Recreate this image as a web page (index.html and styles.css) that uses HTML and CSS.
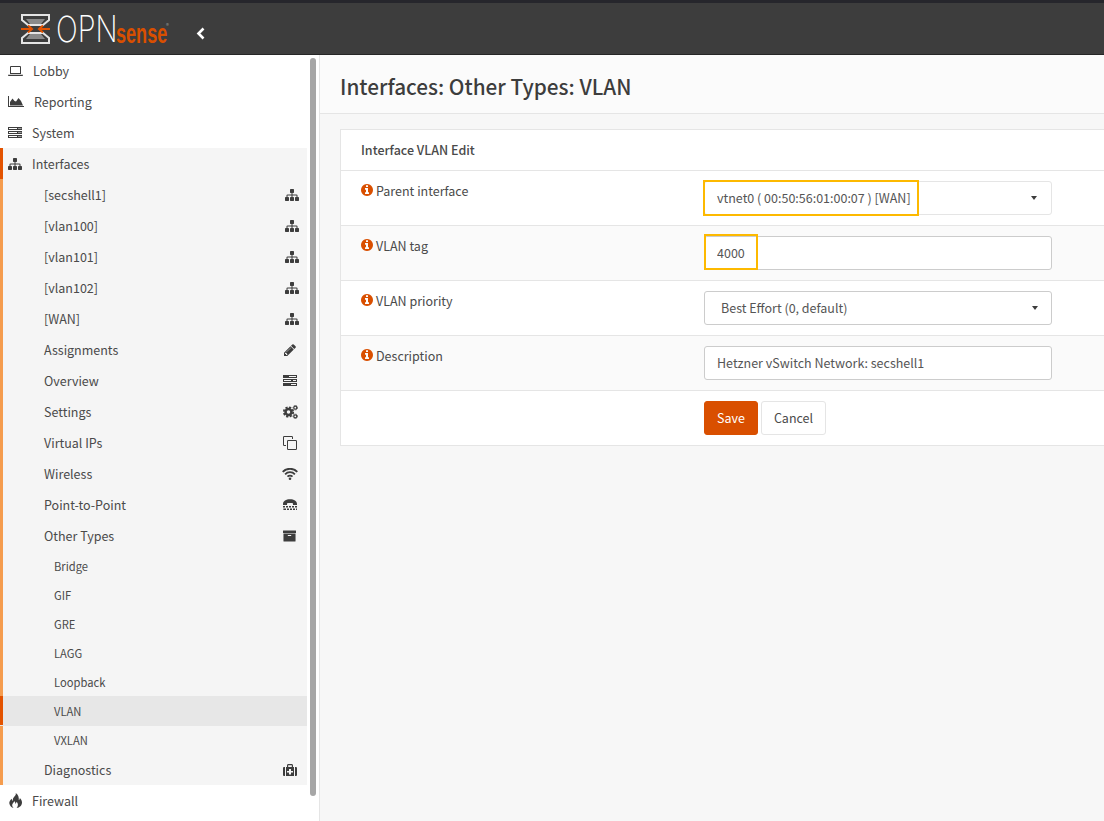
FILE: index.html
```html
<!DOCTYPE html>
<html lang="en">
    <head>
        <meta charset="UTF-8">
        <title>Interfaces: Other Types: VLAN</title>
        <link rel="stylesheet" href="styles.css">
    </head>
    <body>
        <svg class="icon_defs" width="0" height="0">
            <symbol id="i_sitemap" viewBox="0 128 1792 1536"><path d="M1792 1248v320q0 40-28 68t-68 28h-320q-40 0-68-28t-28-68v-320q0-40 28-68t68-28h96v-192h-512v192h96q40 0 68 28t28 68v320q0 40-28 68t-68 28h-320q-40 0-68-28t-28-68v-320q0-40 28-68t68-28h96v-192h-512v192h96q40 0 68 28t28 68v320q0 40-28 68t-68 28h-320q-40 0-68-28t-28-68v-320q0-40 28-68t68-28h96v-192q0-52 38-90t90-38h512v-192h-96q-40 0-68-28t-28-68v-320q0-40 28-68t68-28h320q40 0 68 28t28 68v320q0 40-28 68t-68 28h-96v192h512q52 0 90 38t38 90v192h96q40 0 68 28t28 68z"/></symbol>
            <symbol id="i_pencil" viewBox="0 128 1536 1536"><path d="M363 1536l91-91-235-235-91 91v107h128v128h107zm523-928q0-22-22-22-10 0-17 7l-542 542q-7 7-7 17 0 22 22 22 10 0 17-7l542-542q7-7 7-17zm-54-192l416 416-832 832h-416v-416zm683 96q0 53-37 90l-166 166-416-416 166-165q36-38 90-38 53 0 91 38l235 234q37 39 37 91z"/></symbol>
            <symbol id="i_archive" viewBox="0 128 1792 1536"><path d="M1152 832q0-26-19-45t-45-19h-384q-26 0-45 19t-19 45 19 45 45 19h384q26 0 45-19t19-45zm576-192v960q0 26-19 45t-45 19h-1536q-26 0-45-19t-19-45v-960q0-26 19-45t45-19h1536q26 0 45 19t19 45zm64-448v256q0 26-19 45t-45 19h-1664q-26 0-45-19t-19-45v-256q0-26 19-45t45-19h1664q26 0 45 19t19 45z"/></symbol>
            <symbol id="i_info" viewBox="0 128 1536 1536"><path d="M1024 1376v-160q0-14-9-23t-23-9h-96v-512q0-14-9-23t-23-9h-320q-14 0-23 9t-9 23v160q0 14 9 23t23 9h96v320h-96q-14 0-23 9t-9 23v160q0 14 9 23t23 9h448q14 0 23-9t9-23zm-128-896v-160q0-14-9-23t-23-9h-192q-14 0-23 9t-9 23v160q0 14 9 23t23 9h192q14 0 23-9t9-23zm640 416q0 209-103 385.5t-279.5 279.5-385.5 103-385.5-103-279.5-279.5-103-385.5 103-385.5 279.5-279.5 385.5-103 385.5 103 279.5 279.5 103 385.5z"/></symbol>
            <symbol id="i_area" viewBox="0 0 16 11"><path d="M0 0h1v10h15v1H0z"/><path d="M2 9.500V6l2.500-3.500L6.500 5 8 5.500 10.500 2 13 5l2 4.500z"/></symbol>
            <symbol id="i_laptop" viewBox="0 0 15 10"><path fill-rule="evenodd" d="M3 0h9a1 1 0 0 1 1 1v7H2V1a1 1 0 0 1 1-1zm0 1v6h9V1zM0 8.800h15v.4a.8.800 0 0 1-.8.800H.8a.8.800 0 0 1-.8-.8z"/></symbol>
            <symbol id="i_server" viewBox="0 0 14 11"><path fill-rule="evenodd" d="M0 0h14v3H0zm1 1v1h8V1zm9.500 0v1h1V1zm2 0v1h.8V1zM0 4h14v3H0zm1 1v1h8V5zm9.500 0v1h1V5zm2 0v1h.8V5zM0 8h14v3H0zm1 1v1h8V9zm9.500 0v1h1V9zm2 0v1h.8V9z"/></symbol>
            <symbol id="i_tasks" viewBox="0 0 14 11"><path fill-rule="evenodd" d="M0 0h14v3H0zm6 1v1h7V1zM0 4h14v3H0zm1 1v1h7V5zm9 0v1h3V5zM0 8h14v3H0zm8 1v1h5V9z"/></symbol>
            <symbol id="i_cogs" viewBox="0 0 15 14">
                <circle cx="5.500" cy="7" r="3" fill="none" stroke="currentColor" stroke-width="2.500"/>
                <circle cx="5.500" cy="7" r="4.700" fill="none" stroke="currentColor" stroke-width="1.800" stroke-dasharray="2.200 1.490"/>
                <circle cx="12.300" cy="2.700" r="1.500" fill="none" stroke="currentColor" stroke-width="1.200"/>
                <circle cx="12.300" cy="2.700" r="2.300" fill="none" stroke="currentColor" stroke-width="0.800" stroke-dasharray="1.100 .9"/>
                <circle cx="12.300" cy="11.300" r="1.500" fill="none" stroke="currentColor" stroke-width="1.200"/>
                <circle cx="12.300" cy="11.300" r="2.300" fill="none" stroke="currentColor" stroke-width="0.800" stroke-dasharray="1.100 .9"/>
            </symbol>
            <symbol id="i_clone" viewBox="0 0 14 14">
                <path fill-rule="evenodd" d="M1.300 0h7.400A1.300 1.300 0 0 1 10 1.300V3H9V1.300a.3.300 0 0 0-.3-.3H1.300a.3.300 0 0 0-.3.300v7.400c0 .2.100.3.300.3H3v1H1.300A1.300 1.300 0 0 1 0 8.700V1.300A1.300 1.300 0 0 1 1.300 0z"/>
                <path fill-rule="evenodd" d="M5.300 4h7.400A1.300 1.300 0 0 1 14 5.300v7.400a1.300 1.300 0 0 1-1.300 1.300H5.300A1.300 1.300 0 0 1 4 12.700V5.300A1.300 1.300 0 0 1 5.300 4zm0 1a.3.300 0 0 0-.3.300v7.400c0 .2.100.3.300.3h7.400c.2 0 .3-.1.300-.3V5.300a.3.300 0 0 0-.3-.3z"/>
            </symbol>
            <symbol id="i_wifi" viewBox="0 0 16 12">
                <g fill="none" stroke="currentColor" stroke-width="1.800">
                    <path d="M.7 3.900a10 10 0 0 1 14.600 0"/>
                    <path d="M3.100 6.300a6.700 6.700 0 0 1 9.800 0"/>
                    <path d="M5.500 8.600a3.500 3.500 0 0 1 5 0"/>
                </g>
                <circle cx="8" cy="10.700" r="1.300"/>
            </symbol>
            <symbol id="i_tty" viewBox="0 0 14 11">
                <path d="M0 5.300C0 2 3 .3 7 .3s7 1.700 7 5v.7H10V4.200C9 3.800 5 3.800 4 4.200V6H0z"/>
                <path d="M0 7h2v1.500H0zm3 0h2v1.500H3zm3 0h2v1.500H6zm3 0h2v1.500H9zm3 0h2v1.500h-2zM1 9.500h2V11H1zm3 0h2V11H4zm3 0h2V11H7zm3 0h2V11h-2zm-10 0h.6V11H0zm13 0h1V11h-1z"/>
            </symbol>
            <symbol id="i_medkit" viewBox="0 0 14 12">
                <path fill-rule="evenodd" d="M4 3V1.500C4 .700 4.600 0 5.300 0h3.400C9.400 0 10 .700 10 1.500V3h1v9H3V3zm1.200 0h3.600V1.300H5.200zM6 5v2H4v1.500h2v2h2v-2h2V7H8V5zM0 4.300C0 3.500.500 3 1.200 3H2v9h-.800C.500 12 0 11.500 0 10.700zM12 3h.8c.7 0 1.200.500 1.200 1.300v6.400c0 .8-.5 1.300-1.200 1.300H12z"/>
            </symbol>
            <symbol id="i_fire" viewBox="0 0 13 14">
                <path d="M6.300 0c.5 2-1.100 3-2 4.200C3.600 5.200 3.300 6.200 3.700 7.400 2.800 6.900 2.600 6 2.600 5.300 1 6.600 0 8 .3 9.700c.3 2.100 2 3.700 4 4.200-1-1-1.700-2.200-1.200-3.500.4-1 1.400-1.700 1.800-2.800.8.700 1.100 1.700.9 2.500.8-.4 1.100-1.100 1-2 1.500 1.100 2.300 3.400.3 5.900 2.800-.5 5-2.500 5-5.200 0-1.700-.9-3-2-4.200 0 .8-.3 1.500-1 1.900C9.300 4.400 8.800 1.700 6.300 0z"/>
            </symbol>
        </svg>

        <header class="top_bar">
            <div class="logo">
                <svg class="logo_mark" viewBox="0 0 29 30" width="29" height="30">
                    <path d="M1 1h27v5l-6 5H7L1 6z" fill="none" stroke="#e4e4e4" stroke-width="2"/>
                    <path d="M1 29h27v-5l-6-5H7l-6 5z" fill="none" stroke="#e4e4e4" stroke-width="2"/>
                    <path d="M5 5h19l-4 5H9zM5 25h19l-4-5H9z" fill="#8a8a8a"/>
                    <path d="M0 15h11M7 11.500l4 3.500-4 3.500M29 15H18M22 11.500l-4 3.500 4 3.500" fill="none" stroke="#e35300" stroke-width="2"/>
                </svg>
                <span class="logo_opn">OPN</span><span class="logo_sense">sense</span><span class="logo_reg">®</span>
            </div>
            <svg class="collapse_arrow" viewBox="0 0 9 13" width="9" height="13"><path d="M7.500 1.500L2.500 6.500l5 5" fill="none" stroke="#ffffff" stroke-width="2.600"/></svg>
        </header>

        <div class="page">
            <nav class="sidebar">
                <a class="nav_item"><svg class="nav_icon ic_laptop"><use href="#i_laptop"/></svg>Lobby</a>
                <a class="nav_item"><svg class="nav_icon ic_area"><use href="#i_area"/></svg>Reporting</a>
                <a class="nav_item"><svg class="nav_icon ic_server"><use href="#i_server"/></svg>System</a>
                <a class="nav_item open_item"><svg class="nav_icon ic_sitemap"><use href="#i_sitemap"/></svg>Interfaces</a>
                <div class="sub_menu">
                    <a class="sub_item">[secshell1]<svg class="side_icon"><use href="#i_sitemap"/></svg></a>
                    <a class="sub_item">[vlan100]<svg class="side_icon"><use href="#i_sitemap"/></svg></a>
                    <a class="sub_item">[vlan101]<svg class="side_icon"><use href="#i_sitemap"/></svg></a>
                    <a class="sub_item">[vlan102]<svg class="side_icon"><use href="#i_sitemap"/></svg></a>
                    <a class="sub_item">[WAN]<svg class="side_icon"><use href="#i_sitemap"/></svg></a>
                    <a class="sub_item">Assignments<svg class="side_icon ic_pencil"><use href="#i_pencil"/></svg></a>
                    <a class="sub_item">Overview<svg class="side_icon ic_tasks"><use href="#i_tasks"/></svg></a>
                    <a class="sub_item">Settings<svg class="side_icon ic_cogs"><use href="#i_cogs"/></svg></a>
                    <a class="sub_item">Virtual IPs<svg class="side_icon ic_clone"><use href="#i_clone"/></svg></a>
                    <a class="sub_item">Wireless<svg class="side_icon ic_wifi"><use href="#i_wifi"/></svg></a>
                    <a class="sub_item">Point-to-Point<svg class="side_icon ic_tty"><use href="#i_tty"/></svg></a>
                    <a class="sub_item">Other Types<svg class="side_icon ic_archive"><use href="#i_archive"/></svg></a>
                    <a class="leaf_item">Bridge</a>
                    <a class="leaf_item">GIF</a>
                    <a class="leaf_item">GRE</a>
                    <a class="leaf_item">LAGG</a>
                    <a class="leaf_item">Loopback</a>
                    <a class="leaf_item active_item">VLAN</a>
                    <a class="leaf_item">VXLAN</a>
                    <a class="sub_item">Diagnostics<svg class="side_icon ic_medkit"><use href="#i_medkit"/></svg></a>
                </div>
                <a class="nav_item"><svg class="nav_icon ic_fire"><use href="#i_fire"/></svg>Firewall</a>
                <div class="scroll_thumb"></div>
            </nav>

            <main class="content">
                <div class="title_bar"><h1 class="page_title">Interfaces: Other Types: VLAN</h1></div>
                <section class="panel">
                    <div class="panel_head">Interface VLAN Edit</div>

                    <div class="form_row">
                        <label class="form_label"><svg class="info_icon"><use href="#i_info"/></svg>Parent interface</label>
                        <div class="form_control">
                            <button class="select_btn light_border"><span>vtnet0 ( 00:50:56:01:00:07 ) [WAN]</span><i class="caret"></i></button>
                            <div class="mark_box mark_parent"></div>
                        </div>
                    </div>

                    <div class="form_row">
                        <label class="form_label"><svg class="info_icon"><use href="#i_info"/></svg>VLAN tag</label>
                        <div class="form_control">
                            <input class="text_input" type="text" value="4000">
                            <div class="mark_box mark_tag"></div>
                        </div>
                    </div>

                    <div class="form_row">
                        <label class="form_label"><svg class="info_icon"><use href="#i_info"/></svg>VLAN priority</label>
                        <div class="form_control">
                            <button class="select_btn wide_pad"><span>Best Effort (0, default)</span><i class="caret"></i></button>
                        </div>
                    </div>

                    <div class="form_row">
                        <label class="form_label"><svg class="info_icon"><use href="#i_info"/></svg>Description</label>
                        <div class="form_control">
                            <input class="text_input" type="text" value="Hetzner vSwitch Network: secshell1">
                        </div>
                    </div>

                    <div class="form_row last_row">
                        <div class="form_label"></div>
                        <div class="form_control button_row">
                            <button class="btn btn_save">Save</button>
                            <button class="btn btn_cancel">Cancel</button>
                        </div>
                    </div>
                </section>
            </main>
        </div>
    </body>
</html>
```

FILE: styles.css
```css
* { box-sizing: border-box; }

html, body {
    width: 1104px;
    height: 821px;
    margin: 0px;
    padding: 0px;
    overflow: hidden;
}

body {
    font-family: "Noto Sans CJK SC", "Noto Sans", sans-serif;
    font-size: 12.5px;
    color: #4a4a4a;
    background: #f7f7f7;
}

.icon_defs { position: absolute; }

/* top bar */
.top_bar {
    height: 55px;
    display: flex;
    align-items: center;
    background: #3d3d3d;
    border-top: 3px solid #26262c;
    border-bottom: 1px solid #262626;
    padding-left: 21px;
}

.logo {
    display: flex;
    align-items: flex-end;
    width: 172px;
    height: 30px;
    line-height: 1;
}
.logo_mark { flex: none; margin-right: 6px; }
.logo_opn {
    font-family: "Inter", sans-serif;
    font-weight: 200;
    font-size: 36px;
    color: #ffffff;
    letter-spacing: 0px;
    width: 60px;
    height: 30px;
    line-height: 30px;
    transform: scaleX(0.8);
    transform-origin: left center;
}
.logo_sense {
    font-family: "Liberation Sans", sans-serif;
    font-weight: 700;
    font-size: 27px;
    color: #d94f00;
    width: 52px;
    height: 20px;
    line-height: 20px;
    transform: scaleX(0.67);
    transform-origin: left bottom;
    white-space: nowrap;
}
.logo_reg {
    font-size: 6px;
    color: #999999;
    align-self: flex-start;
    margin: 9px 0px 0px -2px;
}
.collapse_arrow { margin: 9px 0px 0px 3px; }

/* sidebar */
.page {
    display: flex;
    height: 766px;
}

.sidebar {
    position: relative;
    flex: none;
    width: 320px;
    padding-right: 12px;
    background: #ffffff;
    border-right: 1px solid #e5e5e5;
    overflow: hidden;
}

.nav_item {
    display: flex;
    align-items: center;
    height: 31px;
    padding-left: 8px;
    white-space: nowrap;
}
.open_item {
    background: #f5f5f5;
    border-left: 3px solid #e35300;
    padding-left: 5px;
}

.nav_icon { flex: none; margin-right: 10px; fill: #3d3d3d; color: #3d3d3d; }
.ic_laptop { width: 15px; height: 10px; }
.ic_area { width: 16px; height: 11px; }
.ic_server { width: 14px; height: 11px; }
.ic_sitemap { width: 14px; height: 12px; }
.ic_fire { width: 14px; height: 15px; margin: 0px 9px 0px 1px; }

.sub_menu {
    background: #f5f5f5;
    border-left: 3px solid #f59c4e;
}

.sub_item {
    display: flex;
    align-items: center;
    justify-content: space-between;
    height: 31px;
    padding: 0px 8px 0px 41px;
}

.side_icon { flex: none; width: 14px; height: 12px; fill: #3d3d3d; color: #3d3d3d; }
.ic_pencil { width: 12px; height: 12px; margin-right: 3px; }
.ic_tasks { width: 14px; height: 11px; margin-right: 2px; }
.ic_cogs { width: 15px; height: 14px; margin-right: 1px; }
.ic_clone { width: 14px; height: 14px; margin-right: 2px; }
.ic_wifi { width: 16px; height: 12px; margin-right: 1px; }
.ic_tty { width: 14px; height: 11px; margin-right: 2px; }
.ic_archive { width: 13px; height: 12px; margin-right: 3px; }
.ic_medkit { width: 14px; height: 12px; margin-right: 2px; }

.leaf_item {
    display: block;
    height: 29px;
    line-height: 31px;
    padding-left: 51px;
    font-size: 11.2px;
}
.active_item {
    margin-left: -3px;
    background: #e7e7e7;
    border-left: 3px solid #e35300;
    box-shadow: 0px 1px 0px #e7e7e7;
}

.scroll_thumb {
    position: absolute;
    top: 3px;
    left: 310px;
    width: 6px;
    height: 738px;
    border-radius: 3px;
    background: #a6a6a6;
}

/* main column */
.content {
    flex: 1;
    min-width: 0;
    overflow: hidden;
}

.title_bar {
    height: 59px;
    padding: 4px 0px 0px 20px;
    background: #fbfbfb;
    border-bottom: 1px solid #e5e5e5;
    display: flex;
    align-items: center;
}
.page_title {
    margin: 0px;
    font-size: 20.75px;
    font-weight: 500;
    line-height: 1;
    color: #3d3d3d;
}

.panel {
    width: 800px;
    margin: 15px 0px 0px 20px;
    background: #ffffff;
    border: 1px solid #e5e5e5;
}
.panel_head {
    height: 40px;
    padding-left: 20px;
    line-height: 40px;
    font-weight: 500;
    color: #4a4a4a;
}

.form_row {
    display: flex;
    height: 55px;
    border-top: 1px solid #e5e5e5;
    padding-top: 10px;
}
.form_row:nth-child(odd) { background: #fafafa; }

.form_label {
    flex: none;
    width: 363px;
    padding-left: 20px;
    display: flex;
    align-items: center;
    height: 18px;
}
.info_icon {
    flex: none;
    width: 12px;
    height: 12px;
    margin-right: 3px;
    fill: #d94f00;
}

.form_control {
    position: relative;
    flex: none;
    width: 348px;
    height: 34px;
}

.select_btn, .text_input {
    display: flex;
    align-items: center;
    width: 100%;
    height: 34px;
    margin: 0px;
    padding: 0px 12px 2px 12px;
    font: inherit;
    color: #555555;
    background: #ffffff;
    border: 1px solid #cccccc;
    border-radius: 3px;
    outline: none;
}
.select_btn { justify-content: space-between; text-align: left; }
.light_border { border-color: #e5e5e5; }
.wide_pad { padding-left: 16px; }

.caret {
    width: 0px;
    height: 0px;
    margin: 2px 2px 0px 0px;
    border-top: 4px solid #3d3d3d;
    border-left: 3.5px solid transparent;
    border-right: 3.5px solid transparent;
}
.wide_pad .caret { margin-right: 1px; }

.mark_box {
    position: absolute;
    border: 2px solid #fdb900;
    height: 36px;
}
.mark_parent { top: -1px; left: -1px; width: 216px; }
.mark_tag { top: -2px; left: 0px; width: 54px; }

.button_row {
    display: flex;
    gap: 3px;
}
.btn {
    height: 34px;
    padding: 0px 0px 2px 0px;
    font: inherit;
    border-radius: 3px;
}
.btn_save {
    width: 54px;
    color: #ffffff;
    background: #d94f00;
    border: 1px solid #d94f00;
}
.btn_cancel {
    width: 65px;
    color: #4a4a4a;
    background: #ffffff;
    border: 1px solid #e5e5e5;
}
```
